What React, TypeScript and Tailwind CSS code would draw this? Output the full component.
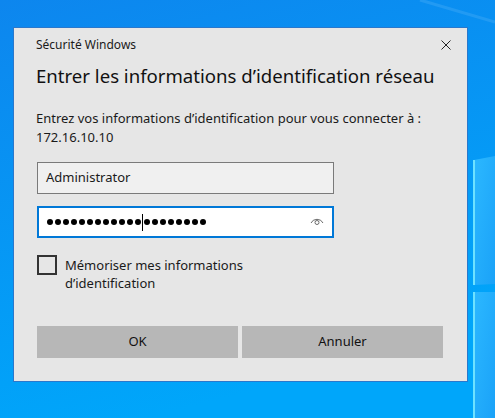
import React from 'react';

const font = { fontFamily: '"Noto Sans", "Open Sans", sans-serif' };

const Wallpaper = () => (
  <svg className="absolute inset-0" width="495" height="418" viewBox="0 0 495 418">
    <defs>
      <linearGradient id="bg" x1="0" y1="0" x2="0.3" y2="1">
        <stop offset="0" stopColor="#0d86ee" />
        <stop offset="1" stopColor="#00a6fa" />
      </linearGradient>
      <linearGradient id="pane" x1="0" y1="0" x2="1" y2="1">
        <stop offset="0" stopColor="#2cb8ff" />
        <stop offset="1" stopColor="#1aa2f8" />
      </linearGradient>
    </defs>
    <rect width="495" height="418" fill="url(#bg)" />
    <path d="M420 0 L495 22" stroke="#3aa6f5" strokeWidth="3" opacity="0.5" />
    <path d="M474 160 L495 156 L495 284 L474 285 Z" fill="url(#pane)" />
    <path d="M474 160 L474 285" stroke="#6ee2ff" strokeWidth="2" />
    <path d="M474 292 L495 292 L495 418 L474 418 Z" fill="url(#pane)" />
    <path d="M474 292 L474 418" stroke="#6ee2ff" strokeWidth="2" />
  </svg>
);

const EyeIcon = () => (
  <svg width="14" height="10" viewBox="0 0 14 10" fill="none">
    <path d="M1 7 A6.5 6 0 0 1 13 7" stroke="#6b6b6b" strokeWidth="1" />
    <circle cx="7" cy="6.5" r="2" stroke="#6b6b6b" strokeWidth="1" />
  </svg>
);

const CloseIcon = () => (
  <svg width="10" height="10" viewBox="0 0 10 10">
    <path d="M0.5 0.5 L9.5 9.5 M9.5 0.5 L0.5 9.5" stroke="#222" strokeWidth="1" />
  </svg>
);

export default function App() {
  const dots = Array.from({ length: 20 });

  return (
    <div className="relative w-[495px] h-[418px] overflow-hidden" style={font}>
      <Wallpaper />
      <div className="relative pt-[27px] pl-[13px]">
        {/* Dialog */}
        <div className="w-[455px] h-[355px] bg-[#e6e6e6] border border-[#2a78cc] text-[#1a1a1a]">
          {/* Title bar */}
          <div className="flex items-center justify-between h-[32px] pl-[22px] pr-[16px] pt-[2px]">
            <span className="text-[12px]">Sécurité Windows</span>
            <CloseIcon />
          </div>

          <div className="pl-[22px] pr-[22px]">
            <h1 className="text-[18.6px] leading-[30px] mt-[1px] text-[#111] whitespace-nowrap">
              Entrer les informations d’identification réseau
            </h1>

            <p className="text-[13px] leading-[19px] mt-[18px]">
              Entrez vos informations d’identification pour vous connecter à :
              <br />
              172.16.10.10
            </p>

            {/* Username */}
            <div className="mt-[15px] ml-[1px] w-[297px] h-[32px] bg-[#f0f0f0] border border-[#7a7a7a] flex items-center pl-[8px] text-[13px]">
              Administrator
            </div>

            {/* Password */}
            <div className="mt-[12px] ml-[1px] w-[297px] h-[32px] bg-white border-2 border-[#0078d7] flex items-center pl-[8px] pr-[8px]">
              <div className="flex items-center gap-[2px]">
                {dots.map((_, i) => (
                  <React.Fragment key={i}>
                    <span className="w-[6px] h-[6px] rounded-full bg-black" />
                    {i === 11 && <span className="w-[1px] h-[17px] bg-black -mx-[1px]" />}
                  </React.Fragment>
                ))}
              </div>
              <div className="ml-auto mt-[-2px]">
                <EyeIcon />
              </div>
            </div>

            {/* Remember */}
            <div className="mt-[17px] ml-[1px] flex items-start gap-[8px]">
              <div className="w-[20px] h-[20px] border-2 border-[#333] shrink-0" />
              <span className="text-[13px] leading-[18px] pt-[1px]">
                Mémoriser mes informations
                <br />
                d’identification
              </span>
            </div>

            {/* Buttons */}
            <div className="mt-[34px] ml-[1px] flex gap-[4px]">
              <button className="w-[201px] h-[32px] bg-[#b7b7b7] text-[13px] text-[#111]">OK</button>
              <button className="w-[201px] h-[32px] bg-[#b7b7b7] text-[13px] text-[#111]">Annuler</button>
            </div>
          </div>
        </div>
      </div>
    </div>
  );
}
